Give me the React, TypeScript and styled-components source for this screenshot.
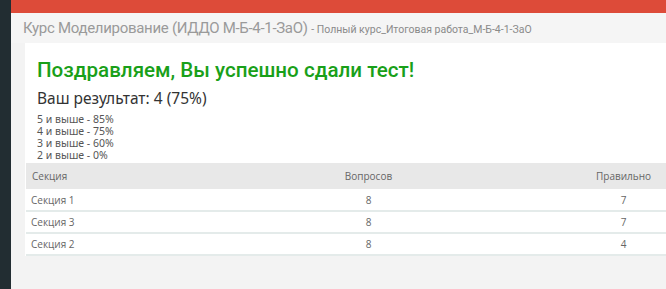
import React from "react";
import styled, { createGlobalStyle } from "styled-components";

const Global = createGlobalStyle`
  html, body { margin: 0; padding: 0; background: #f3f3f3; overflow: hidden; }
  body { font-family: "Open Sans", "Liberation Sans", sans-serif; }
`;

const Shell = styled.div`
  display: flex;
  width: 666px;
  height: 289px;
  overflow: hidden;
`;

const Sidebar = styled.aside`
  width: 11px;
  flex: none;
  background: #222d32;
`;

const Main = styled.div`
  flex: 1;
  display: flex;
  flex-direction: column;
  min-width: 0;
`;

const TopBar = styled.div`
  height: 13px;
  background: #dd4b39;
`;

const TitleBar = styled.div`
  height: 30px;
  display: flex;
  align-items: center;
  padding-left: 12px;
  background: #f5f5f5;
  white-space: nowrap;
`;

const Title = styled.h1`
  margin: 0;
  font-family: Roboto, "Liberation Sans", sans-serif;
  font-weight: 400;
  font-size: 15px;
  letter-spacing: -0.3px;
  color: #9a9a9a;
`;

const Sub = styled.small`
  font-size: 10.5px;
  letter-spacing: 0;
  color: #8a8a8a;
  margin-left: 1px;
`;

const Content = styled.div`
  padding-left: 14px;
`;

const Card = styled.section`
  width: 780px;
  background: #fff;
  padding-top: 13px;
`;

const Body = styled.div`
  padding-left: 12px;
`;

const Heading = styled.h2`
  margin: 0;
  font-family: Roboto, sans-serif;
  font-weight: 500;
  font-size: 20.6px;
  line-height: 28px;
  color: #19a019;
`;

const Result = styled.div`
  font-family: "Noto Sans", sans-serif;
  font-size: 15.5px;
  line-height: 20px;
  color: #333;
  margin-top: 4px;
`;

const Grades = styled.ul`
  list-style: none;
  margin: 5px 0 0;
  padding: 0;
  font-family: "Noto Sans", sans-serif;
  font-size: 10.5px;
  line-height: 12px;
  color: #555;
`;

const Table = styled.table`
  margin: 2px 0 0 1px;
  border-collapse: collapse;
  font-family: "Open Sans", sans-serif;
  font-size: 10px;
  color: #666;
  table-layout: fixed;
  width: 779px;
`;

const Th = styled.th<{ $align?: string; $w?: number }>`
  box-sizing: border-box;
  background: #e8e8e8;
  font-weight: 400;
  height: 26px;
  padding: 0 6px;
  text-align: ${(p) => p.$align || "center"};
  width: ${(p) => (p.$w ? `${p.$w}px` : "auto")};
  color: #666;
`;

const Td = styled.td<{ $align?: string }>`
  box-sizing: border-box;
  height: 22px;
  padding: 0 5px;
  text-align: ${(p) => p.$align || "center"};
  border-bottom: 2px solid #e4ebea;
`;

const rows = [
  ["Секция 1", "8", "7"],
  ["Секция 3", "8", "7"],
  ["Секция 2", "8", "4"],
];

export default function App() {
  return (
    <>
      <Global />
      <Shell>
        <Sidebar />
        <Main>
          <TopBar />
          <TitleBar>
            <Title>
              Курс Моделирование (ИДДО М-Б-4-1-ЗаО)
              <Sub> - Полный курс_Итоговая работа_М-Б-4-1-ЗаО</Sub>
            </Title>
          </TitleBar>
          <Content>
            <Card>
              <Body>
                <Heading>Поздравляем, Вы успешно сдали тест!</Heading>
                <Result>Ваш результат: 4 (75%)</Result>
                <Grades>
                  <li>5 и выше - 85%</li>
                  <li>4 и выше - 75%</li>
                  <li>3 и выше - 60%</li>
                  <li>2 и выше - 0%</li>
                </Grades>
              </Body>
              <Table>
                <thead>
                  <tr>
                    <Th $align="left" $w={215}>Секция</Th>
                    <Th $w={255}>Вопросов</Th>
                    <Th $w={255}>Правильно</Th>
                    <Th />
                  </tr>
                </thead>
                <tbody>
                  {rows.map((r) => (
                    <tr key={r[0]}>
                      <Td $align="left">{r[0]}</Td>
                      <Td>{r[1]}</Td>
                      <Td>{r[2]}</Td>
                      <Td />
                    </tr>
                  ))}
                </tbody>
              </Table>
            </Card>
          </Content>
        </Main>
      </Shell>
    </>
  );
}
